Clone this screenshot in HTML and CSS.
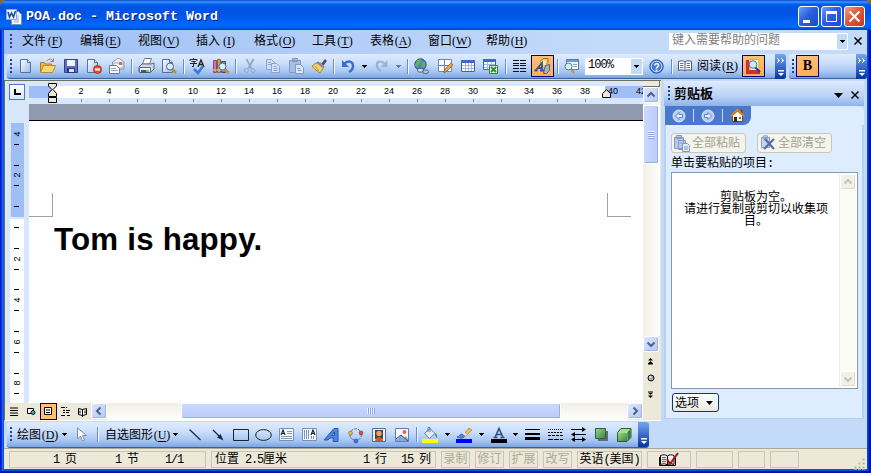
FILE: index.html
```html
<!DOCTYPE html>
<html lang="zh-CN">
<head>
<meta charset="utf-8">
<title>POA.doc - Microsoft Word</title>
<link rel="stylesheet" href="styles.css">
</head>
<body>
<svg width="0" height="0" class="defs">
<defs>
<linearGradient id="gb" x1="0" y1="0" x2="1" y2="1"><stop offset="0" stop-color="#fff"/><stop offset="1" stop-color="#9cb8e8"/></linearGradient>
<linearGradient id="gg" x1="0" y1="0" x2="1" y2="1"><stop offset="0" stop-color="#9fd48c"/><stop offset="1" stop-color="#3c8440"/></linearGradient>
<symbol id="i-drop" viewBox="0 0 5 3"><path d="M0 0h5v1h-1v1h-1v1h-1v-1h-1v-1h-1z"/></symbol>
<symbol id="i-page" viewBox="0 0 16 16"><path d="M3.5 1.500h7l3 3v10h-10z" fill="url(#gb)" stroke="#54709c"/><path d="M10.500 1.500v3h3" fill="#dce8fa" stroke="#54709c"/></symbol>
<symbol id="i-lens" viewBox="0 0 16 16"><path d="M11 11l4 4" stroke="#c88a2c" stroke-width="2.500"/><circle cx="9" cy="8.500" r="3.500" fill="#d4eefc" stroke="#52658c"/></symbol>
</defs>
</svg>
<div class="window">
<header class="title">
  <svg class="app" width="16" height="16" viewBox="0 0 16 16"><path d="M5.500 2.500h7l3 3v10h-10z" fill="#fff" stroke="#7890b8"/><path d="M8 7h5M8 9h5M8 11h5M8 13h5" stroke="#8ba5d8"/><path d="M.5.5h10v10H.5z" fill="#e9f1fd" stroke="#8babe0"/><path d="M2 3l1.500 5 2-4 2 4L9.500 2" fill="none" stroke="#1d4c9e" stroke-width="1.600"/></svg>
  <h1>POA.doc - Microsoft Word</h1>
  <div class="wbtns">
    <span class="wb"><svg width="21" height="21"><path d="M5 14h7v3h-7z" fill="#fff"/></svg></span>
    <span class="wb"><svg width="21" height="21"><path d="M5.500 6.500h10v9h-10z" fill="none" stroke="#fff"/><path d="M5 5h11v3h-11z" fill="#fff"/></svg></span>
    <span class="wb close"><svg width="21" height="21"><path d="M5.500 5.500l10 10M15.500 5.500l-10 10" stroke="#fff" stroke-width="2.200"/></svg></span>
  </div>
</header>
<nav class="menu">
  <i class="grip"></i>
  <ul>
    <li>文件<b>(<u>F</u>)</b></li><li>编辑<b>(<u>E</u>)</b></li><li>视图<b>(<u>V</u>)</b></li><li>插入<b>(<u>I</u>)</b></li><li>格式<b>(<u>O</u>)</b></li><li>工具<b>(<u>T</u>)</b></li><li>表格<b>(<u>A</u>)</b></li><li>窗口<b>(<u>W</u>)</b></li><li>帮助<b>(<u>H</u>)</b></li>
  </ul>
  <div class="ask"><span>键入需要帮助的问题</span><em><svg width="5" height="3"><use href="#i-drop"/></svg></em></div>
  <svg class="mx" width="8" height="8"><path d="M.5.5l7 7M7.500.5l-7 7" stroke="#000" stroke-width="1.500"/></svg>
</nav>
<div class="bars">
<div class="toolbar std">
  <i class="grip"></i>
  <span class="s"><svg width="16" height="16"><use href="#i-page"/></svg></span>
  <span class="s"><svg width="17" height="16" viewBox="0 0 17 16"><path d="M1.500 14v-9.500h4l1 1.500h6v3" fill="#e8b84c" stroke="#a67c28"/><path d="M1.500 14.500l3-7h12l-3 7z" fill="#fbd672" stroke="#b88a30"/><path d="M8 3c2-3 5-2 6 0M14.500.5v3h-3" fill="none" stroke="#b07c20"/></svg></span>
  <span class="s"><svg width="16" height="16"><path d="M1.500 1.500h13v13h-13z" fill="#5a6cc8" stroke="#323f96"/><path d="M4 2h8v6h-8z" fill="#eef3ff"/><path d="M4 10h8v5h-8z" fill="#28357c"/><path d="M6 11h5v3h-5z" fill="#dde4fa"/></svg></span>
  <span class="s"><svg width="16" height="16"><use href="#i-page" x="-2"/><circle cx="11.500" cy="11.500" r="4" fill="#e0512e" stroke="#b0341c"/><path d="M9 11.500h5" stroke="#fff" stroke-width="1.800"/></svg></span>
  <span class="s"><svg width="17" height="16"><path d="M4.500 10V4l5-3.500h2L16 4v7H4.500z" fill="#e8effa" stroke="#8a98b8"/><path d="M6 5h9v5H6z" fill="#fff" stroke="#98a8c8"/><path d="M11 4h3v3h-3z" fill="#e26a48"/><path d="M1.500 7.500h7l3 3v5h-10z" fill="#fff" stroke="#66789c"/><path d="M3 10.500h5M3 12.500h7" stroke="#8aa2cc"/></svg></span>
  <i class="sep"></i>
  <span class="s"><svg width="16" height="16"><path d="M4.500 6l2-5.500h7l-2 5.500z" fill="#fff" stroke="#6b7c98"/><path d="M1 9l3-3h9l3-1v6l-3 3H1z" fill="#d2d8e2" stroke="#5a6a84"/><path d="M1.500 9.500h11v5h-11z" fill="#eef1f5" stroke="#5a6a84"/><path d="M3 12h8v3H3z" fill="#49545f"/><path d="M8 12h3v2H8z" fill="#46e04c"/></svg></span>
  <span class="s"><svg width="16" height="16"><use href="#i-page" x="-2"/><use href="#i-lens"/></svg></span>
  <i class="sep"></i>
  <span class="s"><svg width="17" height="17"><path d="M1 3V1.500h7V3M4.500 0v1.500M2.500 3.500h4L4.500 5v3.500H3M1 5.500h7" fill="none" stroke="#222"/><path d="M9 9l3-7 3 7M10 6.500h4" fill="none" stroke="#222" stroke-width="1.300"/><path d="M5 11l4 4 5-7" fill="none" stroke="#3c78d8" stroke-width="2.500"/></svg></span>
  <span class="s"><svg width="17" height="16"><path d="M1.500 2.500h3v12h-3z" fill="#c478b4" stroke="#864480"/><path d="M5.500 1.500h3v13h-3z" fill="#d4a444" stroke="#8c6a20"/><path d="M9.500 3.500h4v11h-4z" fill="#7288d0" stroke="#3c4c94"/><path d="M1 12h12" stroke="#e8d080"/><use href="#i-lens" x="1"/></svg></span>
  <i class="sep"></i>
  <span class="s"><svg width="16" height="16" fill="none" stroke="#93a5c8"><path d="M4.500 1l5 9.500M11.500 1l-5 9.500" stroke-width="1.700"/><circle cx="4.500" cy="12.500" r="2"/><circle cx="11" cy="12.500" r="2"/></svg></span>
  <span class="s"><svg width="16" height="16" fill="#d3e1f8" stroke="#8ea3cc"><path d="M1.500 1.500h5l3 3v7h-8z"/><path d="M6.500 5.500h5l3 3v6h-8z"/><path d="M3 4.500h3M3 6.500h3M8.500 8.500h3M8.500 10.500h4M8.500 12.500h4"/></svg></span>
  <span class="s"><svg width="16" height="16" fill="#a9bde2" stroke="#8398c4"><path d="M1.500 2.500h11v12h-11zM4.500.5h5v3h-5z"/><path d="M7.500 6.500h5l3 3v6h-8z" fill="#dbe7fb"/><path d="M9.500 10.500h3M9.500 12.500h4"/></svg></span>
  <span class="s"><svg width="16" height="16"><path d="M10 6l4-5 2 2-4 5z" fill="#4a4a80"/><path d="M1 8l4-3h5l3 4-4 6C6 13 3 11 1 8z" fill="#f3cf68" stroke="#a8822c"/><path d="M6 4l6 5" stroke="#7888a8" stroke-width="2"/><path d="M4 8l4 5" stroke="#c09838"/></svg></span>
  <i class="sep"></i>
  <span class="s"><svg width="16" height="16"><path d="M4 6c4-4 9-3 9 2 0 3-2 5-4 6" fill="none" stroke="#3a6cd0" stroke-width="2.400"/><path d="M2 2v7h7z" fill="#3a6cd0"/></svg></span>
  <span class="d"><svg width="5" height="3"><use href="#i-drop"/></svg></span>
  <span class="s"><svg width="16" height="16"><path d="M11 6C7 2 2 3 3 8c0 2 2 4 4 5" fill="none" stroke="#9db2da" stroke-width="2.200"/><path d="M13.500 2v7h-7z" fill="#9db2da"/></svg></span>
  <span class="d off"><svg width="5" height="3"><use href="#i-drop"/></svg></span>
  <i class="sep"></i>
  <span class="s"><svg width="17" height="17"><circle cx="7.500" cy="6.500" r="5.700" fill="#4c80d8" stroke="#2a4c98"/><path d="M4 2l4-.5 1 3-3 1-1 4-3-2zM10 4l2 0 .5 4-3 2-1-3z" fill="#5db848"/><rect x="4.500" y="10.500" width="6" height="3.500" rx="1.700" fill="#d8dee8" stroke="#58687c"/><rect x="9.500" y="12" width="6" height="3.500" rx="1.700" fill="none" stroke="#58687c"/></svg></span>
  <span class="s"><svg width="16" height="16"><path d="M1.500 1.500h13v12h-13zM1.500 7.500h13M7.500 1.500v12" fill="#fff" stroke="#6d86b4"/><path d="M7 15l1-4 6-6 2 2-6 6z" fill="#eba04c" stroke="#875828" stroke-width=".7"/></svg></span>
  <span class="s"><svg width="16" height="16"><path d="M1.500 2.500h13v11h-13z" fill="#fff" stroke="#3c63ae"/><path d="M1 2h14v3H1z" fill="#3c6cc4"/><path d="M2 7.500h12M2 10.500h12M5.500 5v8M8.500 5v8M11.500 5v8" stroke="#a4bade"/></svg></span>
  <span class="s"><svg width="17" height="16"><path d="M1.500 1.500h12v10h-12z" fill="#fff" stroke="#3c63ae"/><path d="M1 1h13v3H1z" fill="#3c6cc4"/><path d="M2 6.500h11M2 9.500h11M5.500 4v7M9.500 4v7" stroke="#a4bade"/><path d="M7.500 7.500h8v8h-8z" fill="#e5f4e3" stroke="#37873c"/><path d="M9 9l5 5M14 9l-5 5" stroke="#2e8a36" stroke-width="1.800"/></svg></span>
  <i class="sep"></i>
  <span class="s"><svg width="13" height="12"><path d="M0 .5h6M0 3.500h6M0 5.500h6M0 8.500h6M0 11.500h6M7 .5h6M7 3.500h6M7 5.500h6M7 8.500h6M7 11.500h6" stroke="#111" stroke-width="1.200"/></svg></span>
  <span class="s on"><svg width="17" height="16"><path d="M7 2.500l2-2h5v4l-2 2H7z" fill="#f0d078" stroke="#8c6c28"/><path d="M7 3h5v4H7z" fill="#fce8a8"/><path d="M10.500 11l1-3.500 4-1v6l-3 3h-3z" fill="#a8b2c0" stroke="#566070"/><path d="M2 12L8 5v8M4 10h4M.5 12.500h3M6 12.500h4" fill="none" stroke="#3553a4" stroke-width="1.800"/></svg></span>
  <i class="sep"></i>
  <span class="s"><svg width="17" height="16"><path d="M3.500 1.500h12v10h-12z" fill="#fff" stroke="#5479b4"/><path d="M4 2h11v2H4z" fill="#6a99e0"/><path d="M10 6.500h4M10 8.500h4" stroke="#81a0cc"/><path d="M8 11l3 4" stroke="#c58a32" stroke-width="2"/><circle cx="5.500" cy="8.500" r="3.500" fill="#d9f3e8" stroke="#557b94"/></svg></span>
  <div class="zoom"><span><s>100%</s></span><em><svg width="5" height="3"><use href="#i-drop"/></svg></em></div>
  <span class="s help"><svg width="15" height="15"><circle cx="7.500" cy="7.500" r="6.700" fill="#4278d4" stroke="#2854a4"/><circle cx="7.500" cy="7.500" r="5.300" fill="none" stroke="#d8e8ff"/><text x="7.500" y="11.500" text-anchor="middle">?</text></svg></span>
  <i class="sep"></i>
  <span class="s"><svg width="15" height="13"><path d="M.5 1.500c3-1 5-1 6.500.5 1.500-1.500 4-1.500 6.500-.5v9c-3-1-5-1-6.500.5-1.500-1.500-4-1.500-6.500-.5zM7 2v9" fill="#fff" stroke="#4c5768"/><path d="M2 3.500h3.500M2 5.500h3.500M2 7.500h3.500M8.500 3.500H12M8.500 5.500H12M8.500 7.500H12" stroke="#6d7888"/></svg></span>
  <span class="read">阅读<b>(<u>R</u>)</b></span>
  <span class="s on rs"><svg width="17" height="17"><path d="M5 1.500h9v11H5z" fill="#f9f5dc" stroke="#c8b058"/><path d="M1 2h3v14H1zM4 12h11v4H4z" fill="#d82c28"/><path d="M13 2h2v10h-2z" fill="#f0c030"/><path d="M10 9l5 5" stroke="#283c98" stroke-width="2.200"/><circle cx="8" cy="6.500" r="3.800" fill="#c8ecfc" stroke="#4870b0"/></svg></span>
  <span class="cap"><svg width="8" height="5"><path d="M0 0h1v1h1v1h1v1H2v1H1v1H0V4h1V1H0zM4 0h1v1h1v1h1v1H6v1H5v1H4V4h1V1H4z" fill="#fff"/></svg><svg width="7" height="7"><path d="M0 0h6v1.500H0zM0 3h6L3 6z" fill="#fff"/></svg></span>
</div>
<div class="toolbar fmt">
  <i class="grip"></i>
  <span class="s on bold">B</span>
  <span class="cap"><svg width="8" height="5"><path d="M0 0h1v1h1v1h1v1H2v1H1v1H0V4h1V1H0zM4 0h1v1h1v1h1v1H6v1H5v1H4V4h1V1H4z" fill="#fff"/></svg><svg width="7" height="7"><path d="M0 0h6v1.500H0zM0 3h6L3 6z" fill="#fff"/></svg></span>
</div>
</div>
<div class="main">
<section class="editor">
  <div class="left">
    <div class="hruler">
      <div class="tab"><svg width="7" height="6"><path d="M1 0v5h6" fill="none" stroke="#000" stroke-width="2"/></svg></div>
      <div class="hscale">
        <div class="nums"><span>2</span><span>4</span><span>6</span><span>8</span><span>10</span><span>12</span><span>14</span><span>16</span><span>18</span><span>20</span><span>22</span><span>24</span><span>26</span><span>28</span><span>30</span><span>32</span><span>34</span><span>36</span><span>38</span><span class="nt">40</span><span class="nt">42</span></div>
        <svg class="indent" width="9" height="21"><path d="M.5.5h8v2.500L5 6.500l3.500 4v3h-8v-3l3.500-4L.5 3z" fill="#ece9d8" stroke="#000"/><path d="M.5 14.500h8v5h-8z" fill="#ece9d8" stroke="#000"/></svg>
        <svg class="rindent" width="9" height="9"><path d="M4.500.7L8.500 4.500v4h-8v-4z" fill="#ece9d8" stroke="#000"/></svg>
      </div>
    </div>
    <div class="work">
      <svg class="vruler" width="24" height="299" viewBox="5 104 24 299">
        <path d="M11 123h13v94H11z" fill="#9ebef5"/><path d="M10 219h14v184H10z" fill="#fff"/>
        <path d="M14 144.500h5M14 165.500h5M14 185.500h5M14 206.500h5M14 227.500h5M14 248.500h5M14 269.500h5M14 289.500h5M14 310.500h5M14 331.500h5M14 352.500h5M14 373.500h5M14 393.500h5" stroke="#000"/>
        <g class="vn"><text transform="translate(20 134) rotate(-90)">4</text><text transform="translate(20 175) rotate(-90)">2</text><text transform="translate(20 259) rotate(-90)">2</text><text transform="translate(20 300) rotate(-90)">4</text><text transform="translate(20 342) rotate(-90)">6</text><text transform="translate(20 383) rotate(-90)">8</text></g>
      </svg>
      <div class="doc">
        <div class="gap"></div>
        <article class="page">
          <div class="crops"><i class="cl"></i><i class="cr"></i></div>
          <p>Tom is happy.</p>
        </article>
      </div>
    </div>
    <div class="hbar">
      <span class="v first"><svg width="9" height="9"><path d="M0 1h8M0 3.500h8M0 6h8M0 8.500h8" stroke="#000" stroke-width="1.100"/></svg></span>
      <span class="v"><svg width="9" height="9"><path d="M.5 1.500h6v5h-6z" fill="#fff" stroke="#000"/><circle cx="6" cy="5.500" r="2" fill="#3b8" stroke="#113"/></svg></span>
      <span class="v sel"><svg width="9" height="9"><path d="M.5.5h7v7h-7z" fill="#fff" stroke="#000"/><path d="M2 3h4M2 5.500h4" stroke="#000"/></svg></span>
      <span class="v"><svg width="9" height="9"><path d="M0 .5h4M2 3.500h2M5 3.500h4M2 5.500h2M5 5.500h3M0 8.500h4M6 8.500h3M5 .5h1" stroke="#000"/></svg></span>
      <span class="v"><svg width="9" height="10"><path d="M.5 1.500l4 1 4-1v6l-4 1-4-1zM4.500 2v8M2 3.500v3M7 3.500v3" fill="#fff" stroke="#000"/></svg></span>
      <span class="sb lb"><svg width="14" height="14"><path d="M8.500 3.500L5 7l3.500 3.500" fill="none" stroke="#4d6185" stroke-width="2"/></svg></span>
      <div class="track"><div class="thumb"><i></i><i></i><i></i><i></i></div></div>
      <span class="sb"><svg width="14" height="14"><path d="M5.500 3.500L9 7l-3.500 3.500" fill="none" stroke="#4d6185" stroke-width="2"/></svg></span>
    </div>
  </div>
  <div class="vbar">
    <div class="split"></div>
    <span class="sb"><svg width="14" height="14"><path d="M3.500 8.500L7 5l3.500 3.500" fill="none" stroke="#4d6185" stroke-width="2"/></svg></span>
    <div class="track"><div class="thumb"><i></i><i></i><i></i><i></i></div></div>
    <span class="sb"><svg width="14" height="14"><path d="M3.500 5.500L7 9l3.500-3.500" fill="none" stroke="#4d6185" stroke-width="2"/></svg></span>
    <div class="browse">
      <svg width="7" height="7"><path d="M3.500 0L6 2.500H1zM3.500 3L6 5.500H1zM1 5h5v1.500H1z"/></svg>
      <svg width="8" height="8"><circle cx="4" cy="4" r="3" fill="#aaa" stroke="#000"/><circle cx="3" cy="3" r="1" fill="#eee"/></svg>
      <svg width="7" height="7"><path d="M3.500 7L6 4.500H1zM3.500 4L6 1.500H1zM1 .5h5V2H1z"/></svg>
    </div>
  </div>
</section>
<aside class="pane">
  <div class="phead"><i class="grip"></i><h2>剪贴板</h2><svg width="9" height="5"><path d="M0 0h9L4.500 5z"/></svg><svg class="px" width="8" height="8"><path d="M.5.5l7 7M7.500.5l-7 7" stroke="#000" stroke-width="1.500"/></svg></div>
  <div class="pnav"><div class="pn">
    <svg width="14" height="14"><circle cx="7" cy="7" r="6" fill="#b7cdf2" stroke="#d9e5f8"/><path d="M7 3.500L3.500 7 7 10.500v-2h3.500v-3H7z" fill="#e8f0fd" stroke="#6382bd"/></svg><i></i>
    <svg width="14" height="14"><circle cx="7" cy="7" r="6" fill="#b7cdf2" stroke="#d9e5f8"/><path d="M7 3.500L10.500 7 7 10.500v-2H3.500v-3H7z" fill="#e8f0fd" stroke="#6382bd"/></svg><i></i>
    <svg width="15" height="15"><path d="M10.500 1.500h2v4h-2z" fill="#a83424"/><path d="M2.500 7.500L7.500 3l5 4.500v6h-10z" fill="#fff8dc" stroke="#6c4a24"/><path d="M.5 8.500l7-7 7 7" fill="none" stroke="#e08428" stroke-width="1.700"/><path d="M4 9h3v5H4z" fill="#302820"/><path d="M9 9h2v2H9z" fill="#3878c0"/></svg>
  </div></div>
  <div class="pbody">
    <div class="pbtns">
      <span class="pb"><svg width="18" height="17" fill="#b8c9e8" stroke="#8498c4"><path d="M1.500 2.500h9v11h-9zM3.500.5h5v3h-5zM5.500 5.500h7v9h-7z"/><path d="M9.500 8.500h5l2 2v6h-7z" fill="#e0e9f8"/><path d="M7 8h2M11 12h4M11 14h4"/></svg><span>全部粘贴</span></span>
      <span class="pb"><svg width="18" height="17" fill="#c4d2ec" stroke="#8fa1c8"><path d="M2.500 2.500h8v10h-8zM4.500.8h4v3h-4z"/><path d="M6 4l9 10M15 4L5 14" stroke="#536ea8" stroke-width="2.200"/></svg><span>全部清空</span></span>
    </div>
    <div class="lbl">单击要粘贴的项目:</div>
    <div class="list">
      <p>剪贴板为空。<br>请进行复制或剪切以收集项<br>目。</p>
      <div class="lscroll">
        <span class="sb dis"><svg width="14" height="14"><path d="M3.500 8.500L7 5l3.500 3.500" fill="none" stroke="#c5c3b6" stroke-width="2"/></svg></span>
        <span class="sb dis"><svg width="14" height="14"><path d="M3.500 5.500L7 9l3.500-3.500" fill="none" stroke="#c5c3b6" stroke-width="2"/></svg></span>
      </div>
    </div>
    <button class="opt"><span>选项</span><svg width="7" height="4"><path d="M0 0h7L3.500 4z"/></svg></button>
  </div>
</aside>
</div>
<div class="dock">
<div class="toolbar draw">
  <i class="grip"></i>
  <span class="t t1">绘图<b>(<u>D</u>)</b></span>
  <span class="d"><svg width="5" height="3"><use href="#i-drop"/></svg></span>
  <span class="s cur"><svg width="12" height="16"><path d="M1.500 1v11l3-3 2 5 2-1-2-4.500h4z" fill="#fff" stroke="#7d8fae"/></svg></span>
  <i class="sep"></i>
  <span class="t t2">自选图形<b>(<u>U</u>)</b></span>
  <span class="d"><svg width="5" height="3"><use href="#i-drop"/></svg></span>
  <span class="s first"><svg width="12" height="12"><path d="M.5.5l11 10.500" stroke="#1a2640" stroke-width="1.200"/></svg></span>
  <span class="s"><svg width="12" height="12"><path d="M1 1l7 7" stroke="#1a2640" stroke-width="1.200"/><path d="M5 8.500L8.500 5l3 6.500z" fill="#1a2640"/></svg></span>
  <span class="s"><svg width="16" height="12"><path d="M.5.5h15v11h-15z" fill="none" stroke="#222"/></svg></span>
  <span class="s"><svg width="17" height="12"><ellipse cx="8.500" cy="6" rx="7.800" ry="5.400" fill="none" stroke="#222"/></svg></span>
  <span class="s"><svg width="15" height="13"><path d="M.5.5h14v12H.5z" fill="#f4f8ff" stroke="#7890ba"/><path d="M2 7l2-5 2 5M3 5.500h2.500" stroke="#222" stroke-width="1.200" fill="none"/><path d="M8 3.500h5M8 5.500h5M2 8.500h11M2 10.500h11" stroke="#8497b5"/></svg></span>
  <span class="s"><svg width="15" height="13"><path d="M.5.5h14v12H.5z" fill="#f4f8ff" stroke="#7890ba"/><path d="M9 7l2-5 2 5M10 5.500h2.500" stroke="#222" stroke-width="1.200" fill="none"/><path d="M2.500 2v9M4.500 2v9M6.500 2v9M9.500 8v3M11.500 8v3" stroke="#8497b5"/></svg></span>
  <span class="s"><svg width="17" height="16"><path d="M0 13L10 1.500h4v13h-5l.3-3.500H6l-2 2zM8 8.500h2.500V5z" fill="#4b86e0" fill-rule="evenodd" stroke="#2858a8"/></svg></span>
  <span class="s"><svg width="16" height="16"><path d="M3 4.500C5 1 10 1 12 4M13.500 7c0 4-2 5.500-4 6M6 13C3 12 2 10 2 8" fill="none" stroke="#5d7292" stroke-dasharray="3 1"/><circle cx="2.500" cy="6" r="1.900" fill="#e8c050" stroke="#7a5c20" stroke-width=".6"/><circle cx="13" cy="6" r="1.900" fill="#d8503c" stroke="#802c20" stroke-width=".6"/><circle cx="8" cy="14" r="1.900" fill="#5c6ce0" stroke="#2c3480" stroke-width=".6"/></svg></span>
  <span class="s"><svg width="14" height="14"><path d="M.5.5h13v13H.5z" fill="#edf2fb" stroke="#536c96"/><path d="M3 2h8v9H3z" fill="#3e4250"/><circle cx="7" cy="5.500" r="2.700" fill="#f0a058"/><path d="M3 13c0-5 8-5 8 0z" fill="#d85c28"/></svg></span>
  <span class="s"><svg width="14" height="14"><path d="M.5.5h13v13H.5z" fill="#f6f9ff" stroke="#5e7db2"/><path d="M1 12l5-5 3 3 2-2 2 3v2H1z" fill="#8ba8d8"/><path d="M1 11l5-4 7 6" stroke="#384c78" fill="none"/><circle cx="9.500" cy="4" r="2" fill="#e86840"/></svg></span>
  <i class="sep"></i>
  <span class="s"><svg width="17" height="16"><path d="M2.500 6.500L8 1.500l5 5-5.500 5z" fill="#e4edf9" stroke="#5f7ba8"/><path d="M6 5V.5h2V5" fill="none" stroke="#5f7ba8"/><path d="M13 6c2 1 2.500 3 2 5-1.500-1-2-3-2-5z" fill="#4a7cc8"/><path d="M0 12h16v4H0z" fill="#ff0"/></svg></span>
  <span class="d"><svg width="5" height="3"><use href="#i-drop"/></svg></span>
  <span class="s"><svg width="17" height="16"><path d="M1 10c3 0 2-3 5-3l3 2c-1 2-4 3-8 1z" fill="#4f88dc" stroke="#3465b0"/><path d="M8 7l5-6 3 2-6 6z" fill="#f0bc58" stroke="#9a7830" stroke-width=".6"/><path d="M6 6l3 3 2-1-3-3z" fill="#dde4ef"/><path d="M0 12h16v4H0z" fill="#00f"/></svg></span>
  <span class="d"><svg width="5" height="3"><use href="#i-drop"/></svg></span>
  <span class="s"><svg width="16" height="16"><path d="M4 10.500L8 1.500l4 9M5.500 7.500h5M2.500 10.500h4M9.500 10.500h4" fill="none" stroke="#304f88" stroke-width="1.600"/><path d="M0 12h16v4H0z" fill="#000"/></svg></span>
  <span class="d"><svg width="5" height="3"><use href="#i-drop"/></svg></span>
  <span class="s"><svg width="15" height="11"><path d="M0 0h15v1H0zM0 4h15v2H0zM0 8h15v3H0z"/></svg></span>
  <span class="s"><svg width="15" height="11"><path d="M0 .5h15" stroke="#000" stroke-dasharray="1 1"/><path d="M0 3.500h15" stroke="#000" stroke-dasharray="2 1"/><path d="M0 6.500h15" stroke="#000" stroke-dasharray="3 1"/><path d="M0 10.500h15" stroke="#000" stroke-dasharray="5 1"/></svg></span>
  <span class="s"><svg width="15" height="15"><path d="M0 2.500h13M2 7.500h13M1 12.500h13" stroke="#000"/><path d="M11 0l4 2.500L11 5zM4 5L0 7.500 4 10zM4 10L0 12.500 4 15zM11 10l4 2.500L11 15z"/></svg></span>
  <span class="s"><svg width="14" height="14"><path d="M3 3h10v10H3z" fill="#5f6d82"/><path d="M.5.500h10v10H.5z" fill="url(#gg)" stroke="#286434"/></svg></span>
  <span class="s"><svg width="15" height="14"><path d="M.5 4.500l3.500-4h10v9l-4 4H.5z" fill="#a5dc96" stroke="#28602c"/><path d="M1 5h9v8H1z" fill="url(#gg)"/><path d="M10.500 4.500l3-4v9l-3 4z" fill="#357a38"/></svg></span>
  <span class="cap"><svg width="7" height="7"><path d="M0 0h6v1.500H0zM0 3h6L3 6z" fill="#fff"/></svg></span>
</div>
</div>
<footer class="status">
  <div class="c c1"><span><s>1 </s>页</span><span><s>1 </s>节</span><span><s>1/1</s></span></div>
  <div class="c c2"><span>位置<s> 2.5</s>厘米</span><span><s>1 </s>行</span><span><s>15 </s>列</span></div>
  <div class="c c3">录制</div><div class="c c3">修订</div><div class="c c3">扩展</div><div class="c c3">改写</div>
  <div class="c c4">英语<s>(</s>美国<s>)</s></div>
  <div class="c c5"><svg width="20" height="14"><path d="M1.500 2.500c3-1 5-1 7 .5 2-1.500 4-1.500 6.500-.5v9c-3-1-5-1-6.500.5-2-1.500-4-1.500-7-.5zM8.500 3v9M.5 4v8.500h16V5" fill="#fff" stroke="#000"/><path d="M3 4.500h4M3 6.500h4M3 8.500h4" stroke="#666"/><path d="M8 6l3 5 8-11" fill="none" stroke="#a80c1c" stroke-width="2"/></svg></div>
  <div class="c c6"></div><div class="c c7"></div><div class="c c8"></div>
  <svg class="size" width="12" height="12"><path d="M8 0h3v3H8zM4 4h3v3H4zM8 4h3v3H8zM0 8h3v3H0zM4 8h3v3H4zM8 8h3v3H8z" fill="#b8b4a2" stroke="#ece9d8"/></svg>
</footer>
</div>
</body>
</html>
```
FILE: styles.css
```css
* { box-sizing: border-box; }
body, h1, h2, p, ul { margin: 0; padding: 0; }
body { width: 871px; height: 473px; overflow: hidden; background: #8a6a30; font: 12px/14px "Liberation Mono", "Noto Sans CJK SC", monospace; color: #000; }
svg { display: block; flex: none; overflow: visible; }
.defs { position: absolute; }
b { font: 12px/14px "Liberation Serif", serif; display: inline-block; width: 18px; text-align: center; }
u { text-underline-offset: 2px; }
i { display: block; flex: none; }
s { text-decoration: none; letter-spacing: -1.2px; }
.window { width: 871px; height: 473px; display: flex; flex-direction: column; border-radius: 8px 8px 0 0; overflow: hidden; background: linear-gradient(transparent 471px, #0010a0 471px), linear-gradient(90deg, #0019cf 0 1px, #0831d9 1px 2px, #166aee 2px 3px, #0855dd 3px 867px, #0048e8 867px 868px, #0034d8 868px 869px, #0010a8 869px); padding: 0 4px 4px; }
.title { height: 30px; flex: none; margin: 0 -4px; padding: 0 6px 0 6px; display: flex; align-items: center; background: linear-gradient(#0a46c8 0, #3d95ff 2px, #0062ee 4px, #0054e3 7px, #0055e5 15px, #0066ff 24px, #0064fa 27px, #0042cc 30px); }
.app { margin: 3px 4px 0 0; }
h1 { flex: 1; font: bold 13.33px/16px "Liberation Mono", monospace; color: #fff; text-shadow: 1px 1px #0a1e80; padding-top: 4px; white-space: pre; }
.wbtns { display: flex; gap: 2px; padding-top: 3px; }
.wb { width: 21px; height: 21px; border: 1px solid #fff; border-radius: 3px; background: linear-gradient(135deg, #6f9cf4, #2a60e0 45%, #1c4ac8); }
.wb svg { margin: -1px; }
.close { background: linear-gradient(135deg, #f0a080, #e0583a 45%, #c8381c); }
.menu { height: 24px; flex: none; display: flex; align-items: center; background: linear-gradient(90deg, #9ebef5, #c3daf9 70%); padding-bottom: 2px; }
.grip { width: 3px; height: 14px; margin-left: 6px; background: repeating-linear-gradient(#27418b 0 2px, transparent 2px 4px) 0 0/2px 100% no-repeat; }
.menu ul { list-style: none; display: flex; flex: 1; margin-left: 9px; }
.menu li { width: 58px; white-space: nowrap; }
.ask { width: 179px; height: 17px; margin-top: 1px; display: flex; background: #fff; color: #808080; line-height: 16px; }
.ask span { flex: 1; padding-left: 3px; }
.ask em { width: 12px; background: #c3daf9; border: 1px solid #fff; display: flex; align-items: center; justify-content: center; }
.mx { margin: 0 5px 0 6px; }
.bars { height: 26px; flex: none; display: flex; gap: 3px; background: #c3daf9; padding-left: 3px; }
.toolbar { display: flex; align-items: center; height: 25px; border-radius: 3px; background: linear-gradient(#dfebfd, #c9defb 40%, #a6c5f2 75%, #7ca5e2); border-bottom: 1px solid #3b619c; }
.toolbar .grip { width: 2px; margin: 0 0 0 3px; }
.std { width: 779px; }
.std .grip { margin-right: 1px; }
.s { width: 23px; height: 22px; flex: none; display: flex; align-items: center; justify-content: center; }
.d { width: 11px; flex: none; display: flex; justify-content: center; }
.off { opacity: .45; }
.sep { width: 6px; height: 15px; background: linear-gradient(90deg, transparent 3px, #6a8ccb 3px 4px, #f1f9ff 4px 5px, transparent 5px); }
.on { background: linear-gradient(#ffbe78, #ffad57); border: 1px solid #000080; }
.zoom { width: 58px; height: 17px; margin-left: 2px; background: #fff; display: flex; line-height: 14px; }
.zoom span { flex: 1; padding-left: 3px; }
.zoom s { letter-spacing: -.9px; }
.zoom em { width: 11px; margin: 1px; background: #c3daf9; display: flex; align-items: center; justify-content: center; }
.help { margin-left: 2px; }
.help text { font: bold 10px "Liberation Sans", sans-serif; fill: #fff; }
.read { width: 45px; white-space: nowrap; }
.cap { width: 11px; height: 25px; align-self: flex-start; margin-left: auto; flex: none; border-radius: 0 3px 3px 0; background: linear-gradient(#75a5f1, #3c6cc8 50%, #06349a); display: flex; flex-direction: column; justify-content: space-between; align-items: center; padding: 4px 0 2px 1px; }
.fmt { width: 78px; }
.fmt .grip { margin-right: 2px; }
.bold { font: bold 14px/20px "Liberation Serif", serif; }
.main { height: 341px; flex: none; display: flex; background: #c3daf9; }
.editor { width: 657px; display: flex; border-top: 1px solid #716f64; border-left: 1px solid #716f64; background: #ece9d8; border-bottom: 1px solid #fff; }
.left { width: 638px; display: flex; flex-direction: column; }
.hruler { height: 23px; flex: none; display: flex; background: #d8e7fc; }
.tab { width: 16px; height: 16px; margin: 3px 4px 0; border: 1px solid #4b78ca; background: linear-gradient(#fff, #d8e7fc); display: flex; align-items: center; justify-content: center; }
.hscale { width: 614px; height: 12px; margin-top: 5px; position: relative; background: linear-gradient(90deg, #9ebef5 23px, #fff 23px 576px, #9ebef5 576px); }
.nums { display: flex; padding-left: 38px; height: 18px; overflow: hidden; font: 9px/11px "Liberation Sans", sans-serif; }
.nums span { width: 28px; flex: none; text-align: center; background: linear-gradient(#848c98, #848c98) 14px 13px/1px 3px no-repeat; }
.nums .nt { background: none; }
.indent { position: absolute; left: 19px; top: -3px; }
.rindent { position: absolute; left: 573px; top: 3px; }
.work { flex: 1; display: flex; }
.vruler { background: #d8e7fc; }
.vn { font: 9px "Liberation Sans", sans-serif; text-anchor: middle; }
.doc { flex: 1; display: flex; flex-direction: column; }
.gap { height: 17px; background: #9199ae; border-bottom: 1px solid #000; }
.page { flex: 1; background: #fff; }
.crops { display: flex; justify-content: space-between; margin: 72px 12px 0 0; }
.crops i { width: 24px; height: 24px; border-bottom: 1px solid #a0a0a0; }
.cl { border-right: 1px solid #a0a0a0; }
.cr { border-left: 1px solid #a0a0a0; }
.page p { font: bold 31.3px/36px "Liberation Sans", sans-serif; letter-spacing: .2px; margin: 5px 0 0 25px; }
.hbar { height: 17px; flex: none; display: flex; background: #ece9d8; }
.v { width: 17px; height: 17px; display: flex; align-items: center; justify-content: center; }
.v.first { width: 18px; }
.sel { background: #ffc06f; border: 1px solid #000080; }
.sb { width: 16px; height: 16px; flex: none; border: 1px solid #fff; border-radius: 2px; background: linear-gradient(135deg, #dbe5fe, #b4c8f6); box-shadow: inset -1px -1px #9db5ea; }
.hbar .track { flex: 1; padding: 0 66px 0 74px; background: linear-gradient(#f0efe6, #fefefb); }
.thumb { border: 1px solid #fff; border-radius: 2px; background: linear-gradient(#c9d8fd, #bccdfa); box-shadow: inset -1px -1px #98b0e8; display: flex; align-items: center; justify-content: center; }
.hbar .thumb { height: 16px; }
.hbar .thumb i { width: 2px; height: 6px; background: linear-gradient(90deg, #eef4fe 1px, #8ca8e0 1px); }
.vbar { width: 18px; display: flex; flex-direction: column; border-right: 1px solid #ece9d8; }
.split { height: 6px; border: 1px solid #716f64; border-width: 0 1px 1px 0; background: #ece9d8; }
.vbar .track { flex: 1; padding-top: 2px; background: linear-gradient(90deg, #f0efe6, #fefefb); }
.vbar .thumb { width: 16px; height: 59px; flex-direction: column; background: linear-gradient(90deg, #c9d8fd, #bccdfa); }
.vbar .thumb i { width: 7px; height: 2px; background: linear-gradient(#eef4fe 1px, #8ca8e0 1px); }
.browse { height: 68px; display: flex; flex-direction: column; align-items: center; gap: 9px; padding: 6px 2px 0 0; }
.pane { width: 202px; margin: 1px 0 0 3px; display: flex; flex-direction: column; }
.phead { height: 25px; flex: none; display: flex; align-items: center; background: linear-gradient(#dfebfd, #b9d2f6 60%, #8eb2ea); margin-right: 2px; }
.phead .grip { margin-left: 4px; height: 15px; }
h2 { flex: 1; font-size: 13px; line-height: 16px; padding: 2px 0 0 3px; }
.px { margin: 3px 5px 0 8px; }
.phead svg { margin-top: 3px; }
.pnav { height: 19px; flex: none; background: #ddecfe; margin: 0 2px 0 1px; border-radius: 0 6px 0 0; }
.pn { width: 86px; height: 19px; display: flex; align-items: center; background: #4a78ca; border-radius: 0 0 8px 0; padding-left: 7px; gap: 6px; }
.pn i { width: 1px; height: 13px; background: #c3daf9; margin: 0 1px; }
.pbody { flex: 1; background: #ddecfe; border: 1px solid #b7d0f8; border-width: 0 2px 1px 2px; margin: 0 2px 2px 0; padding: 8px 0 0 5px; }
.pbtns { display: flex; gap: 11px; }
.pb { width: 75px; height: 20px; border: 1px solid #c9c7ba; border-radius: 3px; background: #f5f4ea; color: #a1a192; display: flex; align-items: center; gap: 1px; padding-left: 1px; white-space: nowrap; }
.pb span { padding-top: 2px; }
.lbl { height: 15px; line-height: 19px; margin-top: 2px; }
.list { width: 187px; height: 217px; margin-top: 2px; border: 1px solid #7f9db9; background: #fff; display: flex; padding: 1px; }
.list p { flex: 1; padding-top: 18px; text-align: center; line-height: 12px; white-space: nowrap; }
.lscroll { width: 17px; background: #fcfcf7; border-left: 1px solid #eeede5; display: flex; flex-direction: column; justify-content: space-between; }
.dis { background: #f2f1e8; border-color: #fff; box-shadow: inset -1px -1px #dddbd0; }
.opt { width: 47px; height: 19px; margin: 4px 0 0 1px; border: 1px solid #003c74; border-radius: 3px; background: linear-gradient(#fff, #ece9e0); display: flex; align-items: center; gap: 7px; padding: 0 0 0 2px; font: inherit; }
.opt span { padding-top: 2px; }
.dock { height: 27px; flex: none; background: #c3daf9; padding: 1px 0 0 3px; }
.draw { width: 642px; height: 26px; }
.draw .cap { justify-content: flex-end; }
.draw .grip { height: 16px; }
.t { white-space: nowrap; flex: none; padding-top: 1px; }
.t1 { width: 42px; margin-left: 5px; }
.t2 { width: 65px; margin-left: 5px; }
.cur { width: 24px; }
.draw .first { margin-left: 2px; }
.status { height: 21px; flex: none; background: #ece9d8; border-top: 1px solid #aca899; display: flex; padding: 2px 0 0 5px; line-height: 16px; gap: 5px; }
.c { height: 17px; border: 1px solid #c8c6bc; white-space: pre; display: flex; flex: none; }
.c1 { width: 197px; padding-left: 43px; gap: 38px; }
.c1 span:nth-child(3) { margin-left: -12px; }
.c2 { width: 225px; padding-left: 3px; }
.c2 span:nth-child(2) { margin-left: auto; }
.c2 span:nth-child(3) { margin: 0 4px 0 14px; }
.c3 { width: 29px; color: #aca899; justify-content: center; }
.c4 { width: 65px; justify-content: center; }
.c5 { width: 44px; justify-content: center; align-items: center; }
.c6 { width: 37px; }
.c7 { width: 27px; }
.c8 { width: 29px; }
.size { margin: 7px 1px 0 auto; }
```
